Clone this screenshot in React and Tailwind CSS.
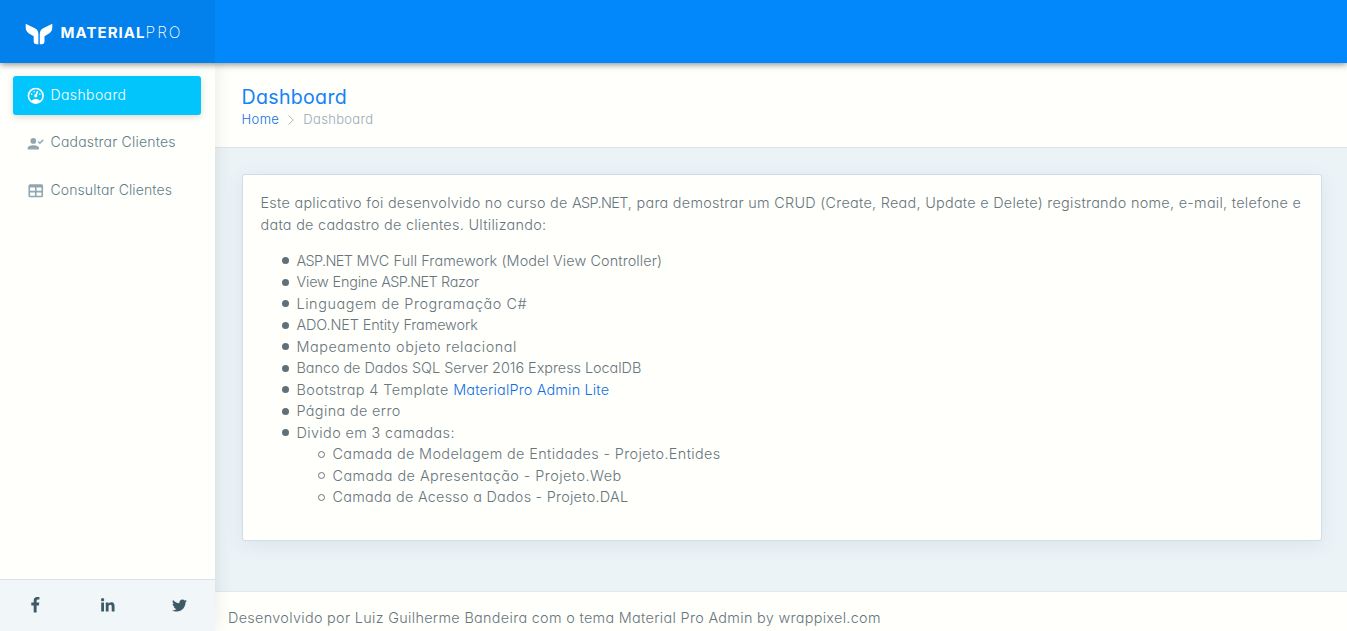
import React from "react";
import { FaLinkedinIn, FaTwitter } from "react-icons/fa";

const icons = {
  gauge:
    "M17.3,18C19,16.5 20,14.4 20,12A8,8 0 0,0 12,4A8,8 0 0,0 4,12C4,14.4 5,16.5 6.7,18C8.2,16.7 10,16 12,16C14,16 15.9,16.7 17.3,18M12,2A10,10 0 0,1 22,12A10,10 0 0,1 12,22A10,10 0 0,1 2,12A10,10 0 0,1 12,2M7,9A1,1 0 0,1 8,10A1,1 0 0,1 7,11A1,1 0 0,1 6,10A1,1 0 0,1 7,9M10,6A1,1 0 0,1 11,7A1,1 0 0,1 10,8A1,1 0 0,1 9,7A1,1 0 0,1 10,6M17,9A1,1 0 0,1 18,10A1,1 0 0,1 17,11A1,1 0 0,1 16,10A1,1 0 0,1 17,9M14.4,6.1C14.9,6.3 15.1,6.9 15,7.4L13.6,10.8C13.8,11.1 14,11.5 14,12A2,2 0 0,1 12,14A2,2 0 0,1 10,12C10,11 10.7,10.1 11.7,10L13.1,6.7C13.3,6.1 13.9,5.9 14.4,6.1Z",
  account:
    "M9,5A3.5,3.5 0 0,1 12.5,8.5A3.5,3.5 0 0,1 9,12A3.5,3.5 0 0,1 5.5,8.5A3.5,3.5 0 0,1 9,5M9,13.75C12.87,13.75 16,15.32 16,17.25V19H2V17.25C2,15.32 5.13,13.75 9,13.75M17,12.66L14.25,9.66L15.41,8.5L17,10.09L20.59,6.5L21.75,7.91L17,12.66Z",
  table:
    "M5,4H19A2,2 0 0,1 21,6V18A2,2 0 0,1 19,20H5A2,2 0 0,1 3,18V6A2,2 0 0,1 5,4M5,8V12H11V8H5M13,8V12H19V8H13M5,14V18H11V14H5M13,14V18H19V14H13Z",
};

function NavItem({ icon, active, tracking, children }) {
  return (
    <a
      className={
        "flex h-[39px] items-center rounded-[3px] pl-[13px] " +
        (active
          ? "bg-[#02c6fb] text-white shadow-[0_2px_7px_rgba(0,0,0,0.16)]"
          : "text-[#607d8b]")
      }
    >
      <svg
        viewBox="0 0 24 24"
        className={"size-[19.5px] " + (active ? "mt-px" : "mt-px text-[#90a7b2]")}
        fill="currentColor"
      >
        <path fillRule="evenodd" d={icons[icon]} />
      </svg>
      <span className={"-mt-[3px] ml-[5px] text-[14px] whitespace-nowrap " + tracking}>{children}</span>
    </a>
  );
}

function AspNet() {
  return <span className="tracking-[-0.6px]">ASP.NET</span>;
}

const topics = [
  ["asp-mvc", <><AspNet /> MVC Full Framework (Model View Controller)</>, "tracking-[0.1px]"],
  ["razor", <>View Engine <AspNet /> Razor</>, "tracking-[-0.18px]"],
  ["csharp", "Linguagem de Programação C#", "tracking-[0.57px]"],
  ["ado", "ADO.NET Entity Framework", "tracking-[-0.1px]"],
  ["orm", "Mapeamento objeto relacional", "tracking-[0.56px]"],
  ["sql", "Banco de Dados SQL Server 2016 Express LocalDB", "tracking-[-0.02px]"],
];

const layers = [
  ["Camada de Modelagem de Entidades - Projeto.Entides", "tracking-[0.38px]"],
  ["Camada de Apresentação - Projeto.Web", "tracking-[0.46px]"],
  ["Camada de Acesso a Dados - Projeto.DAL", "tracking-[0.26px]"],
];

function Bullet({ hollow }) {
  return (
    <span
      className={
        "mr-[7.5px] size-[7px] shrink-0 rounded-full " +
        (hollow ? "border border-[#67757c]" : "bg-[#5f7078]")
      }
    />
  );
}

function Row({ children, hollow, tracking = "" }) {
  return (
    <div className={"flex h-[21.5px] items-center whitespace-pre " + tracking}>
      <Bullet hollow={hollow} />
      <span>{children}</span>
    </div>
  );
}

export default function App() {
  return (
    <div className="flex h-[631px] w-full flex-col overflow-hidden bg-[#ebf3f7] font-['Inter',sans-serif] text-[14.4px] font-light text-[#67757c] [font-feature-settings:'cv11']">
      <header className="relative z-20 flex h-[63px] shrink-0 bg-[#0288fa] shadow-[0_1px_7px_rgba(0,0,0,0.5)]">
        <div className="flex w-[215px] items-center bg-[#0280ec] pl-[25px] text-white">
          <svg viewBox="0 0 28 22" className="mt-1 h-[22px] w-7" fill="currentColor">
            <path d="M.7.8 10.3 5.5Q13.4 7.3 13.4 11.2V21.2H11.2Q8.7 21.2 8.7 18.8V13.2L3.6 10.2Q.7 8.3.7 4.6Z" />
            <path d="M27.3.8 17.7 5.5Q14.8 7.3 14.8 11.2V21.2H17.1Q19.5 21.2 19.5 18.8V13.2L24.4 10.2Q27.3 8.3 27.3 4.6Z" />
          </svg>
          <span className="mt-[3px] ml-[7.5px] text-[15px] font-bold tracking-[1.05px]">MATERIAL</span>
          <span className="mt-[3px] text-[15.5px] font-extralight tracking-[2px]">PRO</span>
        </div>
      </header>

      <div className="flex min-h-0 flex-1">
        <aside className="relative z-10 flex w-[215px] shrink-0 flex-col bg-[#fffffc] shadow-[1px_0_18px_rgba(0,0,0,0.09)]">
          <nav className="flex flex-1 flex-col gap-[8.5px] pt-[13px] pr-3.5 pl-[13px]">
            <NavItem icon="gauge" active tracking="tracking-[0.4px]">Dashboard</NavItem>
            <NavItem icon="account" tracking="tracking-[0.2px]">Cadastrar Clientes</NavItem>
            <NavItem icon="table" tracking="tracking-[0.1px]">Consultar Clientes</NavItem>
          </nav>
          <div className="grid h-[52px] grid-cols-3 items-center justify-items-center border-t border-[#d9e2e6] bg-[#f1f6f8] text-[#3e5a67]">
            <svg viewBox="0 0 9 16" className="-mt-px h-4 w-[9px]" fill="currentColor">
              <path d="M8.4.1V2.6H6.9Q5.6 2.6 5.6 3.9V5.6H8.3L7.9 8.4H5.6V15.5H2.7V8.4H.3V5.6H2.7V3.5Q2.7 0 6.2 0Q7.6 0 8.4.1Z" />
            </svg>
            <FaLinkedinIn className="size-[15.5px]" />
            <FaTwitter className="-mt-px size-[15px]" />
          </div>
        </aside>

        <main className="flex min-w-0 flex-1 flex-col">
          <div className="h-[85px] shrink-0 border-b border-[#dde5ea] bg-[#fffffc] pt-[22px] pl-[26.5px]">
            <h1 className="text-[19.6px] leading-6 font-normal tracking-[0.3px] text-[#1583f5]">Dashboard</h1>
            <div className="flex items-center text-[13px] leading-[21px]">
              <a className="tracking-[0.4px] text-[#0f70e6]">Home</a>
              <svg viewBox="0 0 6 10" className="mr-[9px] ml-[9px] h-2.5 w-1.5" fill="none" stroke="#a6b7bf">
                <path d="m.5.5 4.8 4.5-4.8 4.5" />
              </svg>
              <span className="tracking-[0.32px] text-[#99abb4]">Dashboard</span>
            </div>
          </div>

          <section className="mt-[26px] mr-[25px] ml-[27px] h-[367px] shrink-0 rounded-[3px] border border-[#d0dfe3] bg-[#fffffc] pt-[17px] pl-[17.5px] shadow-[0_4px_18px_rgba(69,90,100,0.09)]">
            <p className="leading-[21.6px] whitespace-nowrap">
              <span className="tracking-[0.28px]">
                Este aplicativo foi desenvolvido no curso de <AspNet />, para demostrar um CRUD (Create, Read, Update e Delete) registrando nome, e-mail, telefone e
              </span>
              <br />
              <span className="tracking-[0.29px]">data de cadastro de clientes. Ultilizando:</span>
            </p>
            <div className="mt-[14.6px] pl-[21.5px]">
              {topics.map(([id, text, tracking]) => (
                <Row key={id} tracking={tracking}>{text}</Row>
              ))}
              <Row>
                <span className="tracking-[0.42px]">{"Bootstrap 4 Template "}</span>
                <a className="tracking-[0.18px] text-[#0f70e6]">MaterialPro Admin Lite</a>
              </Row>
              <Row tracking="tracking-[0.37px]">Página de erro</Row>
              <Row tracking="tracking-[0.38px]">Divido em 3 camadas:</Row>
              <div className="pl-9">
                {layers.map(([text, tracking]) => (
                  <Row key={text} hollow tracking={tracking}>{text}</Row>
                ))}
              </div>
            </div>
          </section>

          <footer className="mt-auto h-10 shrink-0 border-t border-[#e2eaee] bg-[#fffffc] pl-[13px] leading-[51px]">
            <span className="tracking-[0.32px]">Desenvolvido por Luiz Guilherme Bandeira com o tema Material Pro Admin by wrappixel.com</span>
          </footer>
        </main>
      </div>
    </div>
  );
}
